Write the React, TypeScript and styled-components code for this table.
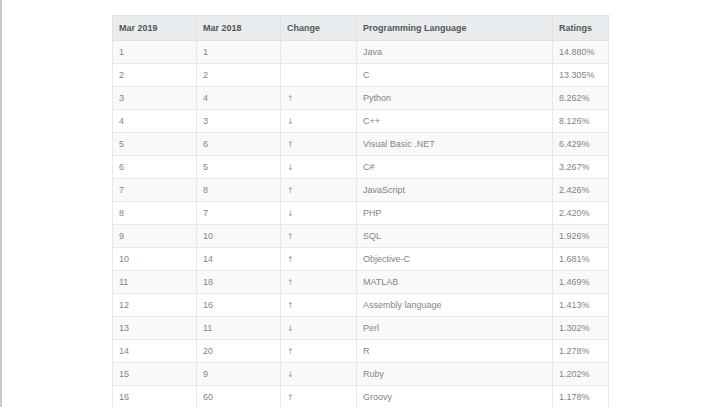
import React from "react";
import styled, { createGlobalStyle } from "styled-components";

const Global = createGlobalStyle`
  html, body { margin: 0; padding: 0; background: #ffffff; }
  body { font-family: "Liberation Sans", Arial, sans-serif; }
`;

const Page = styled.div`
  height: 407px;
  overflow: hidden;
  border-left: 2px solid #cacaca;
  padding: 15px 0 0 110px;
  box-sizing: border-box;
`;

const Table = styled.table`
  border-collapse: collapse;
  table-layout: fixed;
  width: 496px;
  font-size: 9px;
`;

const HeadCell = styled.th`
  background: #e9ecee;
  color: #555555;
  font-weight: bold;
  text-align: left;
  height: 25px;
  padding: 0 6px;
  border: 1px solid #e0e3e5;
  box-sizing: border-box;
`;

const Row = styled.tr<{ $striped: boolean }>`
  background: ${(p) => (p.$striped ? "#f9f9f9" : "#ffffff")};
`;

const Cell = styled.td`
  color: #838383;
  height: 23px;
  padding: 0 6px;
  border: 1px solid #e8e8e8;
  box-sizing: border-box;
  white-space: nowrap;
`;

const Arrow = styled.span`
  color: #9a9a9a;
  font-family: "DejaVu Sans", sans-serif;
  font-size: 8px;
`;

type Entry = [number, number, "" | "up" | "down", string, string];

const data: Entry[] = [
  [1, 1, "", "Java", "14.880%"],
  [2, 2, "", "C", "13.305%"],
  [3, 4, "up", "Python", "8.262%"],
  [4, 3, "down", "C++", "8.126%"],
  [5, 6, "up", "Visual Basic .NET", "6.429%"],
  [6, 5, "down", "C#", "3.267%"],
  [7, 8, "up", "JavaScript", "2.426%"],
  [8, 7, "down", "PHP", "2.420%"],
  [9, 10, "up", "SQL", "1.926%"],
  [10, 14, "up", "Objective-C", "1.681%"],
  [11, 18, "up", "MATLAB", "1.469%"],
  [12, 16, "up", "Assembly language", "1.413%"],
  [13, 11, "down", "Perl", "1.302%"],
  [14, 20, "up", "R", "1.278%"],
  [15, 9, "down", "Ruby", "1.202%"],
  [16, 60, "up", "Groovy", "1.178%"],
];

export default function App() {
  return (
    <>
      <Global />
      <Page>
        <Table>
          <colgroup>
            <col style={{ width: 84 }} />
            <col style={{ width: 84 }} />
            <col style={{ width: 76 }} />
            <col style={{ width: 196 }} />
            <col style={{ width: 56 }} />
          </colgroup>
          <thead>
            <tr>
              <HeadCell>Mar 2019</HeadCell>
              <HeadCell>Mar 2018</HeadCell>
              <HeadCell>Change</HeadCell>
              <HeadCell>Programming Language</HeadCell>
              <HeadCell>Ratings</HeadCell>
            </tr>
          </thead>
          <tbody>
            {data.map(([a, b, c, lang, r], i) => (
              <Row key={a} $striped={i % 2 === 0}>
                <Cell>{a}</Cell>
                <Cell>{b}</Cell>
                <Cell>{c === "up" ? <Arrow>↑</Arrow> : c === "down" ? <Arrow>↓</Arrow> : null}</Cell>
                <Cell>{lang}</Cell>
                <Cell>{r}</Cell>
              </Row>
            ))}
          </tbody>
        </Table>
      </Page>
    </>
  );
}
